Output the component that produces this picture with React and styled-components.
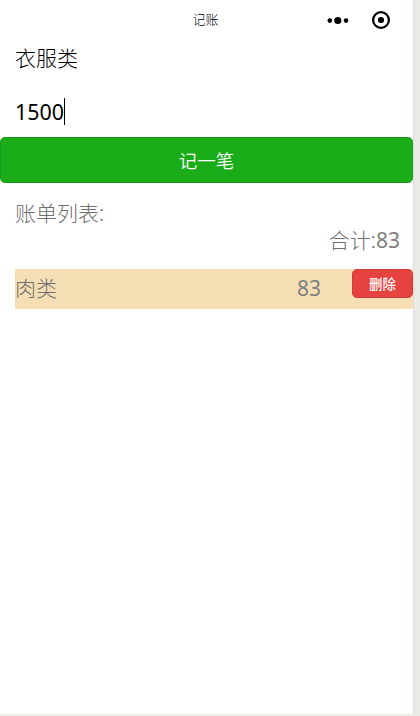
import React from 'react';
import styled, { createGlobalStyle } from 'styled-components';

const GlobalStyle = createGlobalStyle`
  * {
    box-sizing: border-box;
  }

  body {
    background-color: #ebeae6;
    font-family: 'Noto Sans', 'Noto Sans CJK SC', sans-serif;
    margin: 0;
    overflow: hidden;
  }
`;

const Screen = styled.div`
  background-color: #fff;
  box-shadow: 0 2px 2px rgba(90, 95, 75, 0.25);
  height: 714px;
  width: 413px;
`;

const NavBar = styled.header`
  align-items: center;
  display: grid;
  grid-template-columns: 1fr auto 1fr;
  height: 40px;
`;

const NavTitle = styled.h1`
  color: #000;
  font-size: 13px;
  font-weight: 300;
  grid-column: 2;
  line-height: 20px;
  margin: 0;
  padding: 0 2px 3px 0;
`;

const NavActions = styled.div`
  align-items: center;
  display: flex;
  gap: 23px;
  justify-content: flex-end;
  padding-right: 23px;
`;

const Field = styled.div`
  align-items: center;
  color: #000;
  display: flex;
  font-size: ${props => props.size || '21px'};
  font-weight: ${props => props.weight || 300};
  height: 27px;
  line-height: 27px;
  margin-top: ${props => props.gap};
  padding-left: 15px;
`;

const Caret = styled.span`
  background-color: #000;
  height: 27px;
  width: 1px;
`;

const SubmitButton = styled.button`
  background-color: #1aad19;
  border: 1px solid #179b16;
  border-radius: 5px;
  color: #fff;
  display: block;
  font-family: inherit;
  font-size: 18.5px;
  font-weight: 350;
  height: 46px;
  line-height: 45px;
  margin-top: 12px;
  padding: 0;
  width: 100%;
`;

const Bills = styled.section`
  color: #6e6e6e;
  font-size: 21px;
  font-weight: 300;
  line-height: 27px;
  padding: 17px 0 0 15px;
`;

const Total = styled.div`
  padding-right: 13px;
  text-align: right;
`;

const BillRow = styled.div`
  background-color: #f5deb3;
  display: flex;
  height: 40px;
  line-height: 38px;
  margin-top: 15px;
`;

const BillName = styled.span`
  flex: 1;
`;

const Amount = styled.span`
  color: #808080;
  font-weight: 400;
`;

const DeleteButton = styled.button`
  background-color: #e64340;
  border: 1px solid #cf3c3a;
  border-radius: 5px;
  color: #fff;
  font-family: inherit;
  font-size: 13.5px;
  font-weight: 500;
  height: 29px;
  line-height: 27px;
  margin-left: 31px;
  padding: 1px 0 0;
  width: 61px;
`;

const bills = [{ name: '肉类', amount: 83 }];

const MoreIcon = () => (
  <svg width="22" height="20" viewBox="0 0 22 20">
    <circle cx="2.8" cy="10.6" r="2.3" />
    <circle cx="10.8" cy="10.5" r="3.6" />
    <circle cx="19" cy="10.6" r="2.3" />
  </svg>
);

const CloseIcon = () => (
  <svg width="18" height="18" viewBox="0 0 18 18">
    <circle cx="9" cy="9" r="7.9" fill="none" stroke="#000" strokeWidth="2.2" />
    <circle cx="9" cy="9" r="3.1" />
  </svg>
);

const App = () => {
  const total = bills.reduce((sum, bill) => sum + bill.amount, 0);
  return (
    <>
      <GlobalStyle />
      <Screen>
        <NavBar>
          <NavTitle>记账</NavTitle>
          <NavActions>
            <MoreIcon />
            <CloseIcon />
          </NavActions>
        </NavBar>
        <Field gap="5px">衣服类</Field>
        <Field gap="26px" size="21.4px" weight={400}>
          1500
          <Caret />
        </Field>
        <SubmitButton type="button">记一笔</SubmitButton>
        <Bills>
          <div>账单列表:</div>
          <Total>
            合计:
            <Amount>{total}</Amount>
          </Total>
          {bills.map(bill => (
            <BillRow key={bill.name}>
              <BillName>{bill.name}</BillName>
              <Amount>{bill.amount}</Amount>
              <DeleteButton type="button">删除</DeleteButton>
            </BillRow>
          ))}
        </Bills>
      </Screen>
    </>
  );
};

export default App;
